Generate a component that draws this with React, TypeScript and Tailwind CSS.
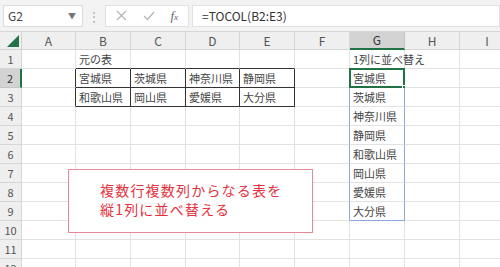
import React from "react";

const cols = [
  { name: "A", w: "w-[54px]" },
  { name: "B", w: "w-[55px]" },
  { name: "C", w: "w-[55px]" },
  { name: "D", w: "w-[54px]" },
  { name: "E", w: "w-[55px]" },
  { name: "F", w: "w-[55px]" },
  { name: "G", w: "w-[55px]" },
  { name: "H", w: "w-[55px]" },
  { name: "I", w: "w-[55px]" },
];

const source = [
  ["宮城県", "茨城県", "神奈川県", "静岡県"],
  ["和歌山県", "岡山県", "愛媛県", "大分県"],
];
const spilled = source.flat();

const font = { fontFamily: '"Noto Sans CJK JP", "Noto Sans", sans-serif' };

// which borders are dark / blue for a given cell (row 1-based, col 0-based)
function cellClass(r: number, c: number) {
  const inTable = r >= 2 && r <= 3 && c >= 1 && c <= 4;
  const inSpill = r >= 2 && r <= 9 && c === 6;
  let right = "border-r-[#e2e2e2]";
  let bottom = "border-b-[#e2e2e2]";
  if (inTable || (c === 0 && r >= 2 && r <= 3)) right = "border-r-[#333]";
  if (inTable || (r === 1 && c >= 1 && c <= 4)) bottom = "border-b-[#333]";
  if (inSpill || (c === 5 && r >= 2 && r <= 9)) right = "border-r-[#8ea6dc]";
  if (r === 9 && c === 6) bottom = "border-b-[#8ea6dc]";
  if (r === 2 && c === 6) bottom = "border-b-[#8ea6dc]";
  return `${right} ${bottom}`;
}

function cellText(r: number, c: number) {
  if (r === 1 && c === 1) return "元の表";
  if (r === 1 && c === 6) return "1列に並べ替え";
  if (r >= 2 && r <= 3 && c >= 1 && c <= 4) return source[r - 2][c - 1];
  if (r >= 2 && r <= 9 && c === 6) return spilled[r - 2];
  return "";
}

const App = () => {
  const rows = Array.from({ length: 12 }, (_, i) => i + 1);

  return (
    <div className="w-[500px] h-[267px] overflow-hidden bg-white relative" style={font}>
      {/* formula bar */}
      <div className="h-[32px] bg-[#f3f3f3] border-b border-[#d6d6d6] flex items-center pl-[3px]">
        <div className="w-[80px] h-[22px] bg-white border border-[#dcdcdc] flex items-center justify-between pl-[4px] pr-[6px] text-[12px] text-[#444]">
          <span>G2</span>
          <span className="text-[8px] text-[#777]">▼</span>
        </div>
        <div className="w-[22px] flex justify-center text-[#aaa] text-[12px]">⋮</div>
        <div className="w-[84px] h-[22px] bg-white border border-[#e0e0e0] flex items-center justify-around px-[2px]">
          <svg width="11" height="11" viewBox="0 0 11 11" stroke="#b5b5b5" strokeWidth="1.2">
            <path d="M1 1L10 10M10 1L1 10" />
          </svg>
          <svg width="12" height="10" viewBox="0 0 12 10" fill="none" stroke="#b5b5b5" strokeWidth="1.2">
            <path d="M1 5L4.5 8.5L11 1" />
          </svg>
          <span className="text-[13px] italic text-[#666]" style={{ fontFamily: '"Liberation Serif", serif' }}>
            f<span className="text-[9px]">x</span>
          </span>
        </div>
        <div className="ml-[3px] flex-1 h-[22px] bg-white border border-[#e0e0e0] flex items-center pl-[9px] text-[12px] text-[#333]">
          =TOCOL(B2:E3)
        </div>
      </div>

      {/* column headers */}
      <div className="flex h-[18px]">
        <div className="w-[22px] shrink-0 bg-[#efefef] border-r border-b border-[#d2d2d2] relative">
          <svg className="absolute right-[2px] bottom-[2px]" width="12" height="12" viewBox="0 0 12 12">
            <path d="M12 0L12 12L0 12Z" fill="#217346" />
          </svg>
        </div>
        {cols.map((col) => (
          <div
            key={col.name}
            className={`${col.w} shrink-0 border-r border-b flex items-center justify-center text-[12px] ${
              col.name === "G"
                ? "bg-[#d3d3d3] border-r-[#c4c4c4] border-b-2 border-b-[#217346] text-[#333]"
                : "bg-[#efefef] border-[#d6d6d6] text-[#555]"
            }`}
          >
            {col.name}
          </div>
        ))}
      </div>

      {/* rows */}
      {rows.map((r) => (
        <div key={r} className="flex h-[19px]">
          <div
            className={`w-[22px] shrink-0 border-b flex items-center justify-center text-[11px] ${
              r === 2
                ? "bg-[#d3d3d3] border-r-2 border-r-[#217346] border-b-[#c4c4c4] text-[#333]"
                : "bg-[#efefef] border-r border-[#d6d6d6] text-[#555]"
            }`}
          >
            {r}
          </div>
          {cols.map((col, c) => (
            <div
              key={col.name}
              className={`${col.w} shrink-0 border-r border-b ${cellClass(r, c)} relative flex items-center pl-[3px] text-[11px] text-[#444] whitespace-nowrap`}
            >
              {cellText(r, c)}
              {r === 2 && c === 6 && (
                <div className="absolute left-[-1px] top-[-1px] right-[-1px] bottom-[-1px] border-2 border-[#217346]">
                  <div className="absolute right-[-3px] bottom-[-3px] w-[4px] h-[4px] bg-[#217346] border border-white" />
                </div>
              )}
            </div>
          ))}
        </div>
      ))}

      {/* text box shape */}
      <div className="absolute left-[68px] top-[169px] w-[245px] h-[64px] bg-white border border-[#e88a95] pl-[31px] pt-[11px] text-[14px] leading-[19px] text-[#e4313d] tracking-[1.2px]">
        <div>複数行複数列からなる表を</div>
        <div>縦1列に並べ替える</div>
      </div>
    </div>
  );
};

export default App;
